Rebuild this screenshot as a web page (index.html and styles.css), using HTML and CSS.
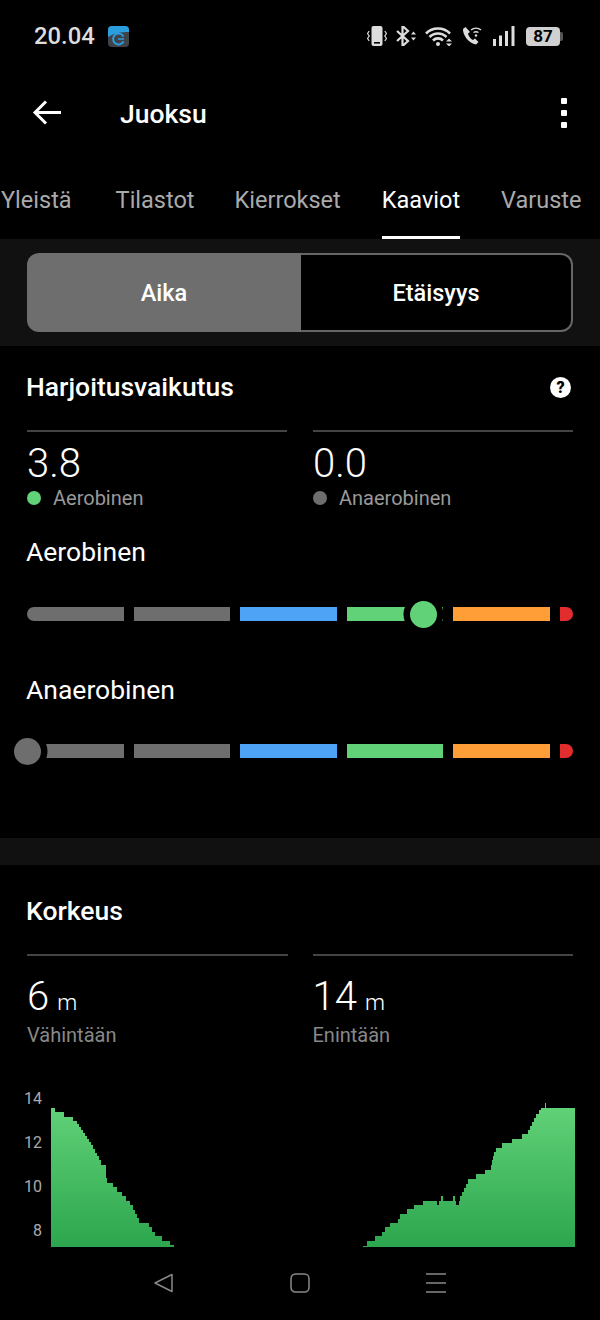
FILE: index.html
```html
<!DOCTYPE html>
<html lang="fi">
<head>
  <meta charset="UTF-8" />
  <meta name="viewport" content="width=device-width, initial-scale=1.0" />
  <title>Juoksu</title>
  <link rel="stylesheet" href="styles.css">
</head>
<body>
  <div class="statusbar">
    <span class="time">20.04</span>
    <svg class="app-icon" width="21" height="21" viewBox="0 0 21 21">
      <rect width="21" height="21" rx="4" fill="#3f4347"/>
      <path d="M0 11V4a4 4 0 0 1 4-4h13a4 4 0 0 1 4 4v2C13 6 6 7 0 11z" fill="#2b9ede"/>
      <path d="M15.5 10.5a5.5 5.5 0 1 0 0 5" fill="none" stroke="#2b9ede" stroke-width="2"/>
      <path d="M10 13h6" stroke="#2b9ede" stroke-width="1.5"/>
    </svg>
    <div class="status-icons">
      <svg width="20" height="20" viewBox="0 0 20 20">
        <rect x="4.500" y="0" width="11" height="20" rx="2" fill="#ddd"/>
        <rect x="7" y="16" width="6" height="1.600" fill="#000"/>
        <path d="M2.200 5L.6 7.500l1.600 2.500-1.600 2.500 1.600 2.500M17.800 5l1.600 2.500-1.600 2.500 1.600 2.500-1.600 2.500" fill="none" stroke="#ddd" stroke-width="1.200"/>
      </svg>
      <svg width="20" height="20" viewBox="0 0 20 20">
        <path d="M1 5l11 10-5.500 5V0L12 5 1 15" fill="none" stroke="#ddd" stroke-width="2.200"/>
        <path d="M15 8.500l2.500-3 2.500 3zM15 11.500l2.500 3 2.500-3z" fill="#ddd"/>
      </svg>
      <svg width="28" height="20" viewBox="0 0 28 20">
        <path d="M1 7.500a17 17 0 0 1 24 0M4.500 11a12 12 0 0 1 17 0M8 14.500a7 7 0 0 1 10 0" fill="none" stroke="#ddd" stroke-width="2.600"/>
        <circle cx="13" cy="18" r="2" fill="#ddd"/>
        <path d="M21 15.500h6l-3-3zM21 17.500h6l-3 3z" fill="#ddd"/>
      </svg>
      <svg width="20" height="20" viewBox="0 0 20 20">
        <path d="M3.500 1L1 3c-.5 6 6 14.500 13 15.500l2.500-2.500-3.500-3.500-2 1.500C8.500 13 6.500 10 6 7.500L8 6z" fill="#ddd"/>
        <path d="M9 4a8 8 0 0 1 10 0M11.500 6.500a4.500 4.500 0 0 1 5 0" fill="none" stroke="#ddd" stroke-width="1.400"/>
        <circle cx="14" cy="9.500" r="1.200" fill="#ddd"/>
      </svg>
      <svg class="signal" width="22" height="20" viewBox="0 0 22 20">
        <rect x="0" y="13" width="3" height="7" fill="#ddd"/>
        <rect x="6" y="9.500" width="3" height="10.500" fill="#ddd"/>
        <rect x="12" y="5" width="3" height="15" fill="#ddd"/>
        <rect x="18.500" y="0" width="3" height="20" fill="#ddd"/>
      </svg>
      <div class="battery"><span class="battery-level">87</span><span class="battery-tip"></span></div>
    </div>
  </div>

  <header class="toolbar">
    <svg class="back" width="30" height="28" viewBox="0 0 30 28">
      <path d="M29 13.500H4M14 2.500L3 13.500l11 11" fill="none" stroke="#fff" stroke-width="3"/>
    </svg>
    <h1 class="toolbar-title">Juoksu</h1>
    <div class="kebab"><span></span><span></span><span></span></div>
  </header>

  <nav class="tabs">
    <a class="tab tab-first">Yleistä</a>
    <a class="tab tab-second">Tilastot</a>
    <a class="tab">Kierrokset</a>
    <a class="tab active">Kaaviot</a>
    <a class="tab">Varuste</a>
  </nav>

  <div class="switch-wrap">
    <div class="switch">
      <div class="switch-item selected">Aika</div>
      <div class="switch-item">Etäisyys</div>
    </div>
  </div>

  <section class="card effect">
    <div class="card-head">
      <h2>Harjoitusvaikutus</h2>
      <span class="help">?</span>
    </div>
    <div class="stats">
      <div class="stat">
        <div class="stat-value">3.8</div>
        <div class="stat-label"><i class="dot green"></i>Aerobinen</div>
      </div>
      <div class="stat">
        <div class="stat-value">0.0</div>
        <div class="stat-label"><i class="dot grey"></i>Anaerobinen</div>
      </div>
    </div>

    <h3>Aerobinen</h3>
    <div class="scale">
      <span class="seg grey first"></span>
      <span class="seg grey"></span>
      <span class="seg blue"></span>
      <span class="seg green"></span>
      <span class="seg orange"></span>
      <span class="seg red"></span>
      <i class="thumb green" style="left: 72.7%"></i>
    </div>

    <h3 class="second">Anaerobinen</h3>
    <div class="scale">
      <span class="seg grey first"></span>
      <span class="seg grey"></span>
      <span class="seg blue"></span>
      <span class="seg green"></span>
      <span class="seg orange"></span>
      <span class="seg red"></span>
      <i class="thumb grey" style="left: 0%"></i>
    </div>
  </section>

  <div class="band"></div>

  <section class="card altitude">
    <div class="card-head">
      <h2>Korkeus</h2>
    </div>
    <div class="stats">
      <div class="stat">
        <div class="stat-value"><span>6</span><small>m</small></div>
        <div class="stat-label">Vähintään</div>
      </div>
      <div class="stat">
        <div class="stat-value"><span>14</span><small>m</small></div>
        <div class="stat-label">Enintään</div>
      </div>
    </div>

    <div class="chart">
      <div class="axis">
        <span>14</span>
        <span>12</span>
        <span>10</span>
        <span>8</span>
      </div>
      <svg width="524" height="171" viewBox="51 1076 524 171">
        <defs>
          <linearGradient id="fill" gradientUnits="userSpaceOnUse" x1="0" y1="1104" x2="0" y2="1247">
            <stop offset="0" stop-color="#62d278"/>
            <stop offset="1" stop-color="#2ca64e"/>
          </linearGradient>
        </defs>
        <path fill="url(#fill)" d="M51 1108H55V1112H64V1117H73V1121H77V1124H79V1127H81V1130H83V1133H85V1136H87V1139H89V1142H91V1145H93V1149H95V1153H97V1156H99V1160H101V1165H106V1178H107V1183H113V1187H117V1192H122V1196H126V1201H130V1205H133V1210H135V1214H137V1218H139V1223H149V1227H152V1232H155V1236H162V1241H170V1245H174V1247H51Z"/>
        <path fill="url(#fill)" d="M363 1246H367V1241H375V1236H382V1232H385V1227H390V1223H398V1219H400V1214H407V1209H414V1205H423V1201H437V1205H439V1201H441V1196H443V1201H453V1196H455V1201H456V1205H459V1201H460V1196H462V1192H464V1188H466V1184H468V1179H476V1174H485V1170H491V1165H492V1160H493V1156H494V1152H496V1148H502V1143H512V1139H522V1134H528V1130H530V1126H532V1122H534V1118H536V1114H539V1110H541V1108H545V1103H546V1108H575V1247H363Z"/>
      </svg>
    </div>
  </section>

  <footer class="navbar">
    <div class="nav-item">
      <svg width="20" height="20" viewBox="0 0 20 20">
        <path d="M18 1.500v17L1 10z" fill="none" stroke="#888" stroke-width="1.500" stroke-linejoin="round"/>
      </svg>
    </div>
    <div class="nav-item">
      <svg width="20" height="20" viewBox="0 0 20 20">
        <rect x="1" y="1" width="18" height="18" rx="4.500" fill="none" stroke="#888" stroke-width="1.500"/>
      </svg>
    </div>
    <div class="nav-item">
      <svg width="20" height="20" viewBox="0 0 20 20">
        <path d="M0 1h20M0 10h20M0 19h20" fill="none" stroke="#888" stroke-width="1.500"/>
      </svg>
    </div>
  </footer>
</body>
</html>
```

FILE: styles.css
```css
* {
  box-sizing: border-box;
}

body {
  font-family: Roboto, "Liberation Sans", sans-serif;
  margin: 0;
  width: 600px;
  height: 1320px;
  overflow: hidden;
  background: #000;
  color: #fff;
}

h1, h2, h3 {
  margin: 0;
}

.statusbar {
  height: 72px;
  display: flex;
  align-items: center;
  padding: 0 37px 0 34px;
}

.time {
  font-size: 23.8px;
  font-weight: 500;
  color: #ddd;
}

.app-icon {
  margin-left: 13px;
}

.status-icons {
  margin-left: auto;
  display: flex;
  align-items: center;
  gap: 9px;
}

.signal {
  margin: 0 2px;
}

.battery {
  display: flex;
  align-items: center;
}

.battery-level {
  width: 34px;
  height: 19px;
  border-radius: 4px;
  background: #d0d0d0;
  color: #000;
  font-size: 17px;
  font-weight: 700;
  line-height: 19px;
  text-align: center;
}

.battery-tip {
  width: 3px;
  height: 9px;
  border-radius: 0 2px 2px 0;
  background: #555;
}

.toolbar {
  height: 84px;
  display: flex;
  align-items: center;
  padding: 0 33px 2px 32px;
}

.toolbar-title {
  margin-left: 58px;
  font-size: 26.5px;
  font-weight: 500;
}

.kebab {
  margin-left: auto;
  display: flex;
  flex-direction: column;
  gap: 6px;
}

.kebab span {
  width: 6px;
  height: 6px;
  border-radius: 1px;
  background: #fff;
}

.tabs {
  height: 83px;
  display: flex;
  padding-left: 1px;
  overflow: hidden;
}

.tab {
  margin-right: 41px;
  padding-top: 31px;
  font-size: 23.5px;
  line-height: 26px;
  color: #aaa;
  white-space: nowrap;
}

.tab-first {
  margin-right: 44px;
}

.tab-second {
  margin-right: 40px;
}

.tab.active {
  color: #fff;
  border-bottom: 3px solid #fff;
}

.switch-wrap {
  background: #111;
  padding: 14px 27px;
}

.switch {
  height: 79px;
  display: flex;
}

.switch-item {
  flex: 1;
  display: flex;
  align-items: center;
  justify-content: center;
  background: #000;
  border: 2px solid #666;
  border-left: none;
  border-radius: 0 12px 12px 0;
  font-size: 23.5px;
  font-weight: 500;
}

.switch-item.selected {
  flex: 0 0 274px;
  background: #6e6e6e;
  border: none;
  border-radius: 12px 0 0 12px;
}

.card {
  padding: 0 27px;
}

.effect {
  height: 492px;
  padding-top: 26px;
}

.altitude {
  padding-top: 31px;
}

.card-head {
  display: flex;
  align-items: center;
  justify-content: space-between;
  height: 30px;
}

.card-head h2 {
  margin-left: -1px;
  font-size: 26.5px;
  font-weight: 500;
  line-height: 30px;
}

.help {
  width: 21px;
  height: 21px;
  margin-right: 2px;
  border-radius: 50%;
  background: #fff;
  color: #000;
  font-size: 16px;
  font-weight: 900;
  line-height: 21px;
  text-align: center;
}

.stats {
  display: grid;
  grid-template-columns: 1fr 1fr;
  gap: 26px;
  margin-top: 28px;
}

.altitude .stats {
  gap: 25px;
}

.stat {
  border-top: 2px solid #444;
}

.stat-value {
  padding-top: 9px;
  font-size: 40px;
  font-weight: 300;
  line-height: 46px;
}

.altitude .stat-value {
  display: flex;
  align-items: baseline;
  gap: 8px;
  padding-top: 18px;
}

.stat-value small {
  font-size: 22.5px;
  line-height: 24px;
}

.stat-label {
  display: flex;
  align-items: center;
  gap: 12px;
  margin-top: -1px;
  font-size: 20px;
  line-height: 24px;
  color: #999;
}

.altitude .stat-label {
  margin-top: 3px;
  color: #888;
}

.dot {
  width: 14px;
  height: 14px;
  border-radius: 50%;
}

h3 {
  margin: 27px 0 0 -1px;
  font-size: 26.5px;
  font-weight: 400;
  line-height: 30px;
}

h3.second {
  margin-top: 54px;
}

.scale {
  position: relative;
  height: 14px;
  margin-top: 40px;
  display: flex;
  gap: 10px;
}

.second + .scale {
  margin-top: 39px;
}

.seg {
  flex: 1;
}

.seg.first {
  border-radius: 7px 0 0 7px;
}

.seg.red {
  flex: none;
  width: 13px;
  border-radius: 0 7px 7px 0;
}

.thumb {
  position: absolute;
  top: -6.5px;
  width: 27px;
  height: 27px;
  margin-left: -13.5px;
  border-radius: 50%;
  box-shadow: 0 0 0 6.5px #000;
}

.green { background: #62d278; }
.grey { background: #6e6e6e; }
.blue { background: #4fa3f7; }
.orange { background: #ff9d37; }
.red { background: #e12d2d; }

.band {
  height: 27px;
  background: #111;
}

.chart {
  height: 171px;
  margin: 29px -27px 0;
  display: flex;
  overflow: hidden;
}

.chart svg {
  flex: none;
}

.axis {
  width: 42px;
  margin-right: 9px;
  padding-top: 1px;
  flex: none;
  text-align: right;
  font-size: 16px;
  line-height: 44px;
  color: #aaa;
}

.axis span {
  display: block;
}

.navbar {
  height: 73px;
  display: flex;
  justify-content: center;
  background: #000;
}

.nav-item {
  width: 136px;
  padding-top: 26px;
  display: flex;
  justify-content: center;
}
```
